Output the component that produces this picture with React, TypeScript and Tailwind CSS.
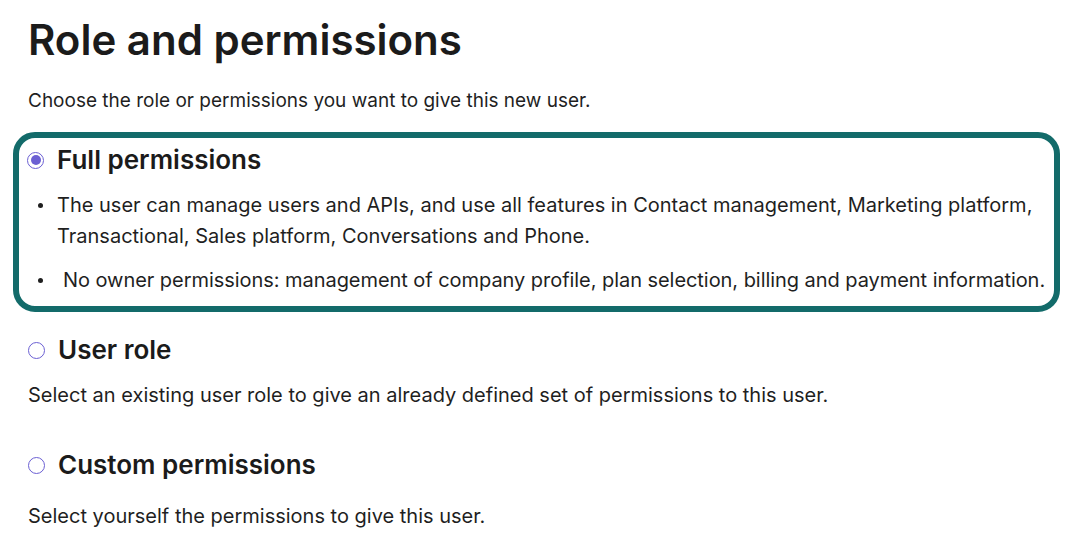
import React from 'react';

const OPTIONS = [
  {
    id: 'user',
    label: 'User role',
    description: 'Select an existing user role to give an already defined set of permissions to this user.',
  },
  {
    id: 'custom',
    label: 'Custom permissions',
    description: 'Select yourself the permissions to give this user.',
  },
];

function Radio({ checked }: { checked?: boolean }) {
  return (
    <span className="flex h-[17px] w-[17px] shrink-0 items-center justify-center rounded-full border-[1.5px] border-[#6b5fd3] bg-white">
      {checked && <span className="h-[10px] w-[10px] rounded-full bg-[#6b5fd3]" />}
    </span>
  );
}

function Bullet({ children, className = '' }: { children: React.ReactNode; className?: string }) {
  return (
    <li className="flex">
      <span className="flex h-[31px] w-[30px] shrink-0 items-center justify-end pr-[14px]">
        <span className="h-[5px] w-[5px] rounded-full bg-[#1f1f1f]" />
      </span>
      <span className={className}>{children}</span>
    </li>
  );
}

export default function App() {
  return (
    <div className="min-h-screen bg-white pl-[13px] pr-[8px] pt-[15px] text-[#1f1f1f] [font-family:Inter,'Noto_Sans',sans-serif]">
      <h1 className="pl-[15px] text-[42px] font-semibold leading-[50px] text-[#1b1b1b]">Role and permissions</h1>
      <p className="mt-[22px] pl-[15px] text-[19px] leading-[28px]">
        Choose the role or permissions you want to give this new user.
      </p>

      {/* Selected option */}
      <div className="mt-[17px] rounded-[22px] border-[6px] border-[#136b6a] pb-[10px] pl-[8px] pr-0 pt-[7px]">
        <label className="flex items-center gap-[13px]">
          <Radio checked />
          <span className="text-[26px] font-semibold leading-[30px] text-[#1b1b1b]">Full permissions</span>
        </label>
        <ul className="mt-[15px] flex flex-col gap-[13px] text-[20px] leading-[31px]">
          <Bullet className="pr-[6px]">
            The user can manage users and APIs, and use all features in Contact management, Marketing platform,
            Transactional, Sales platform, Conversations and Phone.
          </Bullet>
          <Bullet className="whitespace-nowrap pl-[6px] tracking-[-0.05px]">
            No owner permissions: management of company profile, plan selection, billing and payment information.
          </Bullet>
        </ul>
      </div>

      <div className="pl-[15px]">
        {OPTIONS.map((o, i) => (
          <div key={o.id} className={i === 0 ? 'mt-[23px]' : 'mt-[41px]'}>
            <label className="flex items-center gap-[13px]">
              <Radio />
              <span className="text-[26px] font-semibold leading-[30px] text-[#1b1b1b]">{o.label}</span>
            </label>
            <p className={`${i === 0 ? 'mt-[16px]' : 'mt-[22px]'} text-[20px] leading-[28px]`}>{o.description}</p>
          </div>
        ))}
      </div>
    </div>
  );
}
